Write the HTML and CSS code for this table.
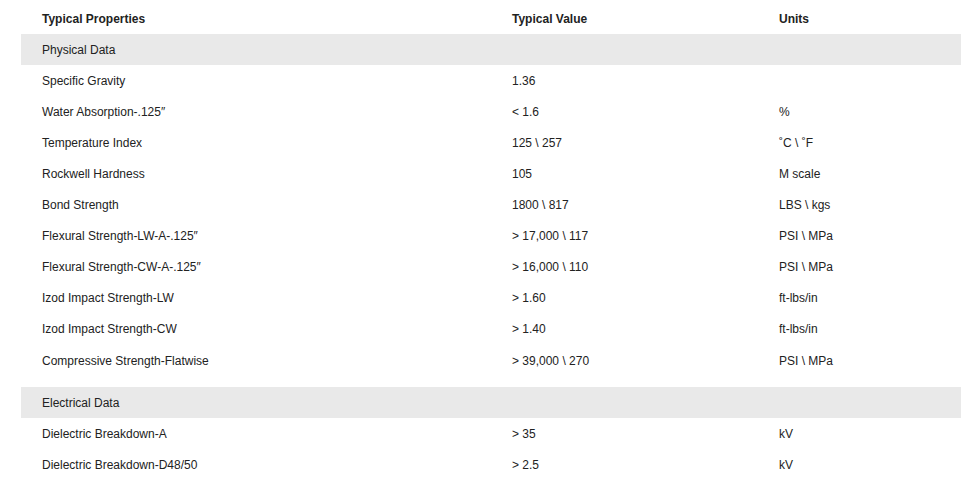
FILE: index.html
```html
<!DOCTYPE html>
<html>
<head>
<meta charset="utf-8">
<link rel="stylesheet" href="styles.css">
</head>
<body>
<div class="sheet">
  <div class="row head"><div>Typical Properties</div><div>Typical Value</div><div>Units</div></div>
  <div class="row group"><div>Physical Data</div><div></div><div></div></div>
  <div class="row"><div>Specific Gravity</div><div>1.36</div><div></div></div>
  <div class="row"><div>Water Absorption-.125″</div><div>&lt; 1.6</div><div>%</div></div>
  <div class="row"><div>Temperature Index</div><div>125 \ 257</div><div>˚C \ ˚F</div></div>
  <div class="row"><div>Rockwell Hardness</div><div>105</div><div>M scale</div></div>
  <div class="row"><div>Bond Strength</div><div>1800 \ 817</div><div>LBS \ kgs</div></div>
  <div class="row"><div>Flexural Strength-LW-A-.125″</div><div>&gt; 17,000 \ 117</div><div>PSI \ MPa</div></div>
  <div class="row"><div>Flexural Strength-CW-A-.125″</div><div>&gt; 16,000 \ 110</div><div>PSI \ MPa</div></div>
  <div class="row"><div>Izod Impact Strength-LW</div><div>&gt; 1.60</div><div>ft-lbs/in</div></div>
  <div class="row"><div>Izod Impact Strength-CW</div><div>&gt; 1.40</div><div>ft-lbs/in</div></div>
  <div class="row"><div>Compressive Strength-Flatwise</div><div>&gt; 39,000 \ 270</div><div>PSI \ MPa</div></div>
  <div class="row group spaced"><div>Electrical Data</div><div></div><div></div></div>
  <div class="row"><div>Dielectric Breakdown-A</div><div>&gt; 35</div><div>kV</div></div>
  <div class="row"><div>Dielectric Breakdown-D48/50</div><div>&gt; 2.5</div><div>kV</div></div>
</div>
</body>
</html>
```
FILE: styles.css
```css
html, body {
  margin: 0;
  padding: 0;
  background: #fff;
}
body {
  font-family: "Liberation Sans", Arial, sans-serif;
  font-size: 12px;
  color: #222;
}
.sheet {
  margin: 3px 19px 0 21px;
  width: 940px;
}
.row {
  display: grid;
  grid-template-columns: 470px 267px 203px;
  height: 31.1px;
  align-items: center;
}
.row > div {
  padding-left: 21px;
}
.head {
  font-weight: bold;
}
.group {
  background: #e9e9e9;
}
.spaced {
  margin-top: 11px;
}
```
